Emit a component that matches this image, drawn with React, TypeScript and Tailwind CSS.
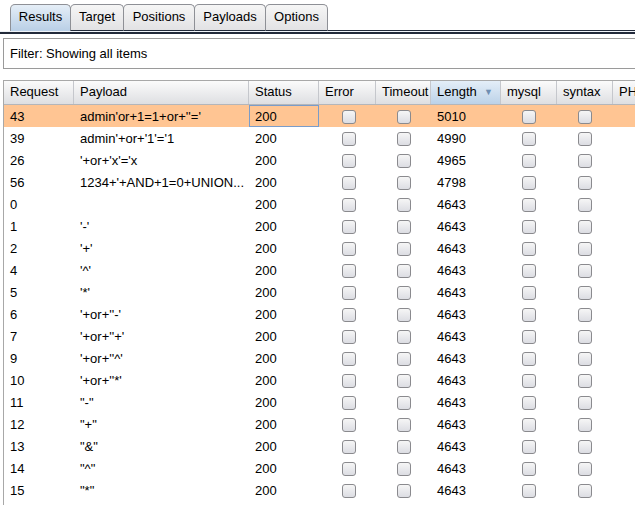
import React from 'react';

type Row = { req: string; payload: string; status: string; length: string };

const rows: Row[] = [
    { req: '43', payload: "admin'or+1=1+or+''='", status: '200', length: '5010' },
    { req: '39', payload: "admin'+or+'1'='1", status: '200', length: '4990' },
    { req: '26', payload: "'+or+'x'='x", status: '200', length: '4965' },
    { req: '56', payload: "1234+'+AND+1=0+UNION...", status: '200', length: '4798' },
    { req: '0', payload: '', status: '200', length: '4643' },
    { req: '1', payload: "'-'", status: '200', length: '4643' },
    { req: '2', payload: "'+'", status: '200', length: '4643' },
    { req: '4', payload: "'^'", status: '200', length: '4643' },
    { req: '5', payload: "'*'", status: '200', length: '4643' },
    { req: '6', payload: "'+or+''-'", status: '200', length: '4643' },
    { req: '7', payload: "'+or+''+'", status: '200', length: '4643' },
    { req: '9', payload: "'+or+''^'", status: '200', length: '4643' },
    { req: '10', payload: "'+or+''*'", status: '200', length: '4643' },
    { req: '11', payload: '"-"', status: '200', length: '4643' },
    { req: '12', payload: '"+"', status: '200', length: '4643' },
    { req: '13', payload: '"&"', status: '200', length: '4643' },
    { req: '14', payload: '"^"', status: '200', length: '4643' },
    { req: '15', payload: '"*"', status: '200', length: '4643' },
];

const tabs = [
    { name: 'Results', w: 'w-[61px]', active: true },
    { name: 'Target', w: 'w-[54px]', active: false },
    { name: 'Positions', w: 'w-[72px]', active: false },
    { name: 'Payloads', w: 'w-[72px]', active: false },
    { name: 'Options', w: 'w-[63px]', active: false },
];

const Check = () => (
    <div className="w-[14px] h-[14px] rounded-[3px] border border-[#8a8a8e] bg-gradient-to-b from-[#f6f6f6] to-[#dcdde3]" />
);

const HeaderCell: React.FC<{ w: string; children?: React.ReactNode; sorted?: boolean }> = ({ w, children, sorted }) => (
    <div
        className={`${w} shrink-0 h-full flex items-center px-[6px] pb-[2px] border-r border-[#c5c7cc] ${
            sorted ? 'bg-gradient-to-b from-[#e4eef8] to-[#bcd2e8] justify-between' : 'bg-gradient-to-b from-[#fbfbfb] to-[#dedfe2]'
        }`}
    >
        <span>{children}</span>
        {sorted && <span className="text-[#6f8fb3] text-[9px] mr-[1px] pt-[2px]">▼</span>}
    </div>
);

const App: React.FC = () => {
    return (
        <div className="w-[635px] h-[505px] overflow-hidden bg-white text-[13px] text-black" style={{ fontFamily: '"Liberation Sans", Arial, sans-serif' }}>
            {/* Tabs */}
            <div className="flex items-end pl-[10px] pt-[4px] h-[31px]">
                {tabs.map((t, i) => (
                    <div
                        key={t.name}
                        className={`${t.w} h-[27px] flex items-center justify-center pb-[2px] rounded-t-[5px] border border-[#8e9096] ${i > 0 ? '-ml-px' : ''} ${
                            t.active ? 'border-b-0 bg-gradient-to-b from-[#e5eef7] to-[#b9cfe6]' : 'border-b-[#222a3a] bg-gradient-to-b from-[#f6f6f6] to-[#e2e2e4]'
                        }`}
                    >
                        {t.name}
                    </div>
                ))}
                <div className="flex-1 h-px bg-[#222a3a]" />
            </div>
            <div className="h-[3px] border-b-2 border-[#222a3a] bg-[#eef2f7]" />

            {/* Filter */}
            <div className="pl-[3px] pt-[4px]">
                <div className="h-[31px] border border-r-0 border-[#9a9a9a] flex items-center pl-[6px]">Filter: Showing all items</div>
            </div>

            {/* Table */}
            <div className="ml-[3px] mt-[11px] border-l border-t border-[#a8a8a8] h-[440px]">
                <div className="flex h-[24px] border-b border-[#b4b6ba]">
                    <HeaderCell w="w-[70px]">Request</HeaderCell>
                    <HeaderCell w="w-[175px]">Payload</HeaderCell>
                    <HeaderCell w="w-[70px]">Status</HeaderCell>
                    <HeaderCell w="w-[57px]">Error</HeaderCell>
                    <HeaderCell w="w-[55px]">Timeout</HeaderCell>
                    <HeaderCell w="w-[70px]" sorted>Length</HeaderCell>
                    <HeaderCell w="w-[56px]">mysql</HeaderCell>
                    <HeaderCell w="w-[56px]">syntax</HeaderCell>
                    <HeaderCell w="w-[60px]">PHP</HeaderCell>
                </div>
                {rows.map((r, i) => {
                    const sel = i === 0;
                    return (
                        <div key={r.req} className={`flex h-[22px] items-center pt-[2px] ${sel ? 'bg-[#ffc593]' : ''}`}>
                            <div className="w-[70px] shrink-0 px-[6px]">{r.req}</div>
                            <div className="w-[175px] shrink-0 px-[6px] whitespace-nowrap overflow-hidden">{r.payload}</div>
                            <div className={`w-[70px] shrink-0 h-[22px] -mt-[2px] pt-[2px] flex items-center px-[5px] ${sel ? 'border border-[#7a9cc9]' : 'border border-transparent'}`}>
                                {r.status}
                            </div>
                            <div className="w-[57px] shrink-0 flex justify-center pl-[2px]"><Check /></div>
                            <div className="w-[55px] shrink-0 flex justify-center"><Check /></div>
                            <div className="w-[70px] shrink-0 px-[6px]">{r.length}</div>
                            <div className="w-[56px] shrink-0 flex justify-center"><Check /></div>
                            <div className="w-[56px] shrink-0 flex justify-center"><Check /></div>
                        </div>
                    );
                })}
            </div>
        </div>
    );
};

export default App;
